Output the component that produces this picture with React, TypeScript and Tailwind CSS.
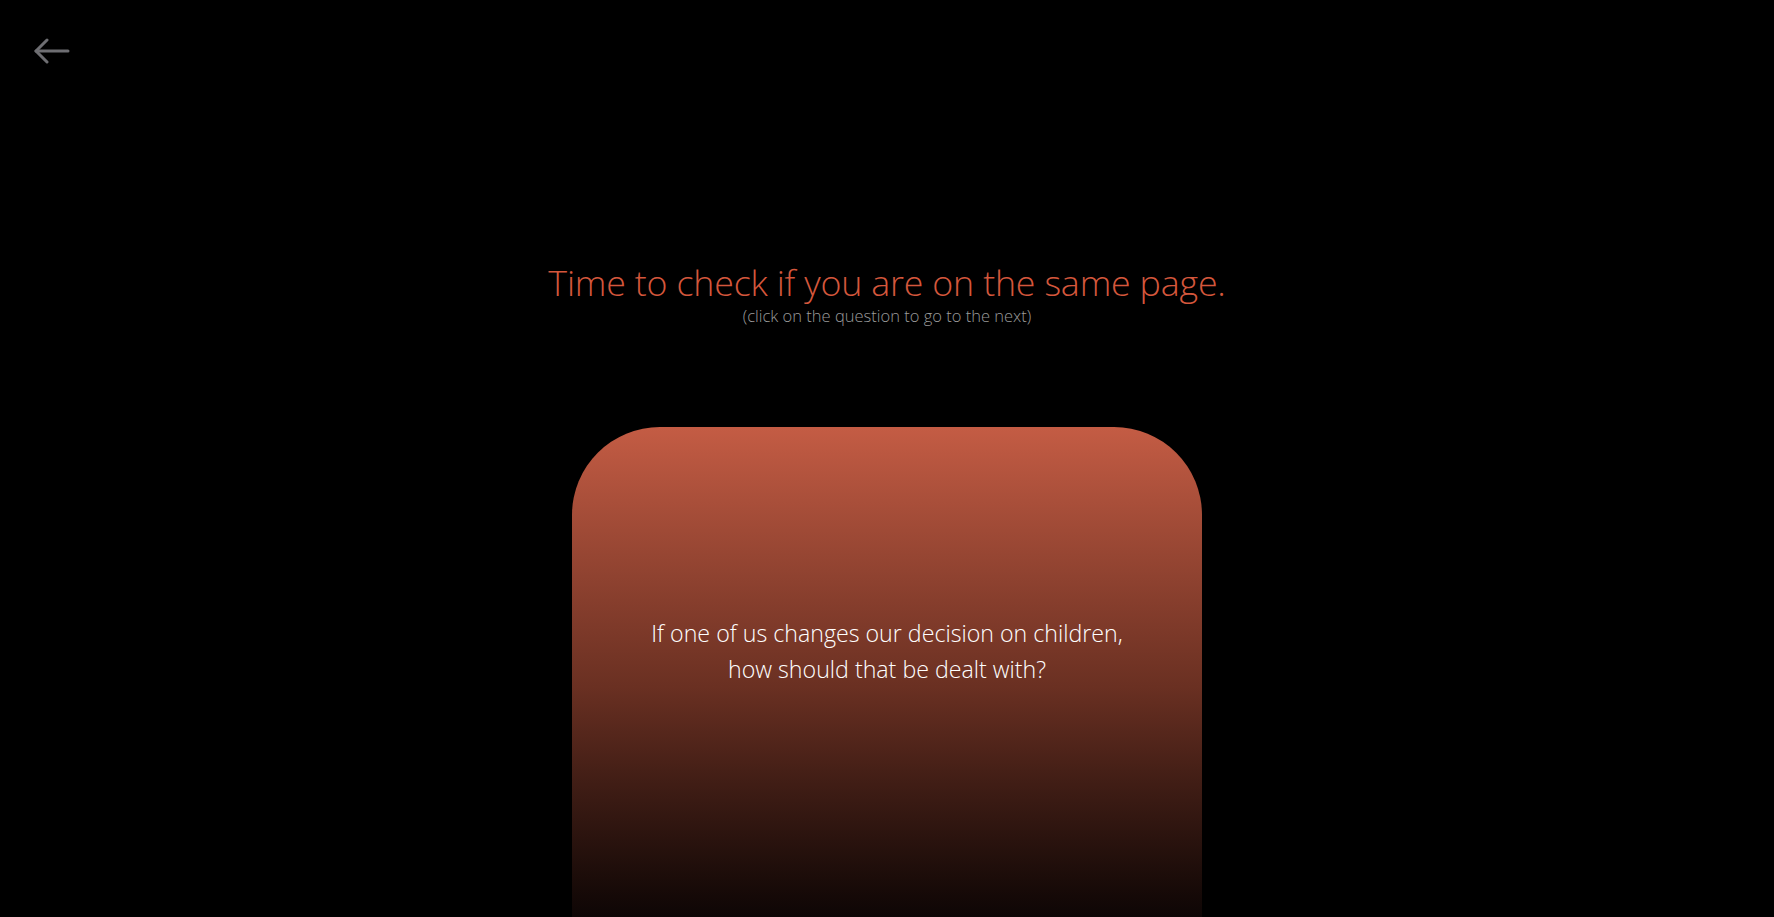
import { useState } from "react"

const questions = [
  ["If one of us changes our decision on children,", "how should that be dealt with?"],
  ["How do we want to split the chores", "around the house?"],
  ["What does a good weekend", "look like for each of us?"],
]

const App = () => {
  const [index, setIndex] = useState(0)

  const next = () => {
    setIndex((index + 1) % questions.length)
  }

  return (
    <div className="h-screen w-full overflow-hidden bg-black flex flex-col items-center font-['Open_Sans',sans-serif]">
      <div className="w-full px-[34px] pt-[38px]">
        <button className="block text-[#6e6e72]" aria-label="Back">
          <svg width="36" height="26" viewBox="0 0 36 26" fill="none" stroke="currentColor" strokeWidth="3" strokeLinecap="round" strokeLinejoin="round">
            <path d="M2 13H34" />
            <path d="M13 2L2 13L13 24" />
          </svg>
        </button>
      </div>

      <h1 className="mt-[196px] text-[35.8px] leading-[44px] font-light text-[#d4573c] tracking-[-0.2px]">
        Time to check if you are on the same page.
      </h1>
      <p className="mt-[1px] text-[16.5px] leading-[22px] font-light text-[#9a9a9a]">
        (click on the question to go to the next)
      </p>

      <div
        onClick={next}
        className="mt-[100px] w-[630px] h-[520px] shrink-0 cursor-pointer rounded-t-[88px] bg-gradient-to-b from-[#c45c44] via-[#6a3022] via-50% to-[#050303] pt-[188px] text-center"
      >
        <p className="text-[23.2px] leading-[36px] font-light text-white">
          {questions[index][0]}
          <br />
          {questions[index][1]}
        </p>
      </div>
    </div>
  )
}

export default App
